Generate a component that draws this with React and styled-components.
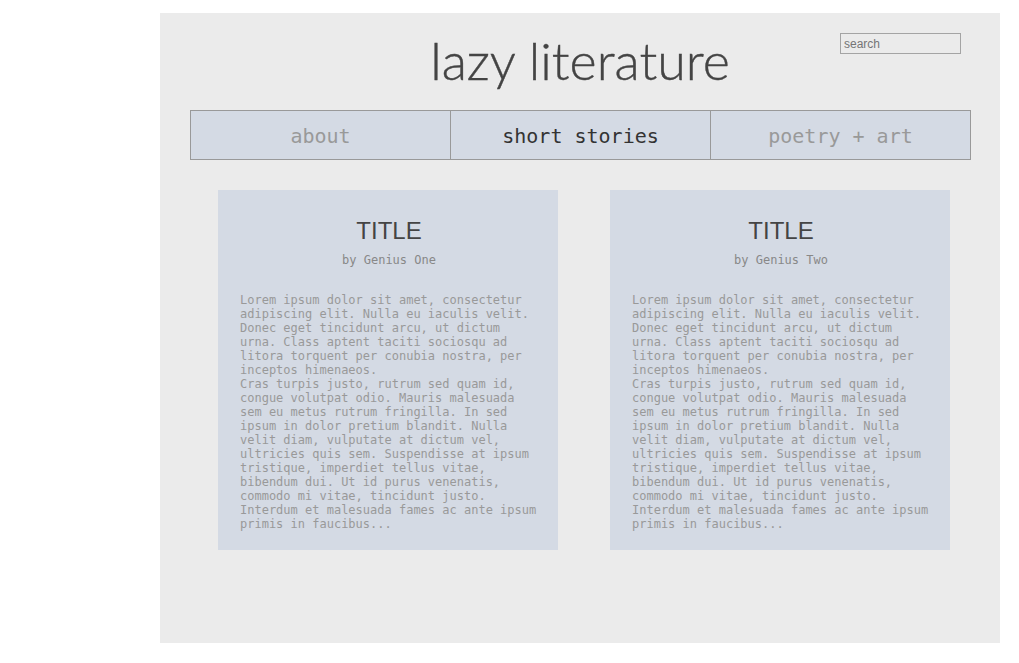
import React from 'react';
import styled, { createGlobalStyle } from 'styled-components';

const GlobalStyle = createGlobalStyle`
  body {
    margin: 0;
    background: #fff;
    font-family: "Liberation Sans", Arial, sans-serif;
  }
`;

const StyledPage = styled.div`
  width: 840px;
  height: 630px;
  margin: 13px 0 0 160px;
  background-color: #ebebeb;
  padding-top: 16px;
  box-sizing: border-box;
`;

const StyledHeader = styled.header`
  display: grid;
  grid-template-columns: 1fr auto 1fr;
  align-items: start;
`;

const StyledLogo = styled.h1`
  grid-column: 2;
  margin: 0;
  font-family: Lato, "Open Sans", sans-serif;
  font-weight: 300;
  font-size: 52px;
  line-height: 62px;
  color: #444;
  -webkit-text-stroke: 0.4px #444;
`;

const StyledSearch = styled.input`
  grid-column: 3;
  justify-self: end;
  margin: 4px 39px 0 0;
  width: 121px;
  height: 21px;
  box-sizing: border-box;
  padding: 0 3px;
  border: 1px solid #a4a4a4;
  background: #ebebeb;
  font-family: "Liberation Sans", Arial, sans-serif;
  font-size: 12px;
  color: #333;

  ::placeholder {
    color: #999;
  }
`;

const StyledNav = styled.nav`
  display: grid;
  grid-template-columns: 259px 260px 260px;
  margin: 19px 29px 0 30px;
  border: 1px solid #999;
  background-color: #d4dae4;
`;

const StyledNavItem = styled.a`
  height: 48px;
  padding-top: 1px;
  box-sizing: border-box;
  display: flex;
  align-items: center;
  justify-content: center;
  font-family: "DejaVu Sans Mono", monospace;
  font-size: 20px;
  color: ${({ active }) => (active ? '#333' : '#999')};
  text-decoration: none;

  & + & {
    border-left: 1px solid #999;
  }
`;

const StyledGrid = styled.div`
  display: grid;
  grid-template-columns: 340px 340px;
  column-gap: 52px;
  margin: 30px 0 0 58px;
`;

const StyledCard = styled.article`
  height: 360px;
  box-sizing: border-box;
  padding: 27px 20px 0 22px;
  background-color: #d4dae4;
`;

const StyledTitle = styled.h2`
  margin: 0;
  text-align: center;
  font-weight: 400;
  font-size: 24px;
  line-height: 28px;
  color: #444;
`;

const StyledAuthor = styled.p`
  margin: 8px 0 0;
  text-align: center;
  font-family: "DejaVu Sans Mono", monospace;
  font-size: 12px;
  line-height: 14px;
  color: #888;
`;

const StyledBody = styled.p`
  margin: 26px 0 0;
  font-family: "DejaVu Sans Mono", monospace;
  font-size: 12px;
  line-height: 14px;
  color: #999;
`;

const lorem = [
  'Lorem ipsum dolor sit amet, consectetur adipiscing elit. Nulla eu iaculis velit. Donec eget tincidunt arcu, ut dictum urna. Class aptent taciti sociosqu ad litora torquent per conubia nostra, per inceptos himenaeos.',
  'Cras turpis justo, rutrum sed quam id, congue volutpat odio. Mauris malesuada sem eu metus rutrum fringilla. In sed ipsum in dolor pretium blandit. Nulla velit diam, vulputate at dictum vel, ultricies quis sem. Suspendisse at ipsum tristique, imperdiet tellus vitae, bibendum dui. Ut id purus venenatis, commodo mi vitae, tincidunt justo. Interdum et malesuada fames ac ante ipsum primis in faucibus...',
];

const stories = [
  { id: 1, title: 'TITLE', author: 'Genius One' },
  { id: 2, title: 'TITLE', author: 'Genius Two' },
];

const App = () => (
  <>
    <GlobalStyle />
    <StyledPage>
      <StyledHeader>
        <StyledLogo>lazy literature</StyledLogo>
        <StyledSearch placeholder="search" />
      </StyledHeader>
      <StyledNav>
        <StyledNavItem>about</StyledNavItem>
        <StyledNavItem active>short stories</StyledNavItem>
        <StyledNavItem>poetry + art</StyledNavItem>
      </StyledNav>
      <StyledGrid>
        {stories.map(story => (
          <StyledCard key={story.id}>
            <StyledTitle>{story.title}</StyledTitle>
            <StyledAuthor>by {story.author}</StyledAuthor>
            <StyledBody>
              {lorem[0]}
              <br />
              {lorem[1]}
            </StyledBody>
          </StyledCard>
        ))}
      </StyledGrid>
    </StyledPage>
  </>
);

export default App;
